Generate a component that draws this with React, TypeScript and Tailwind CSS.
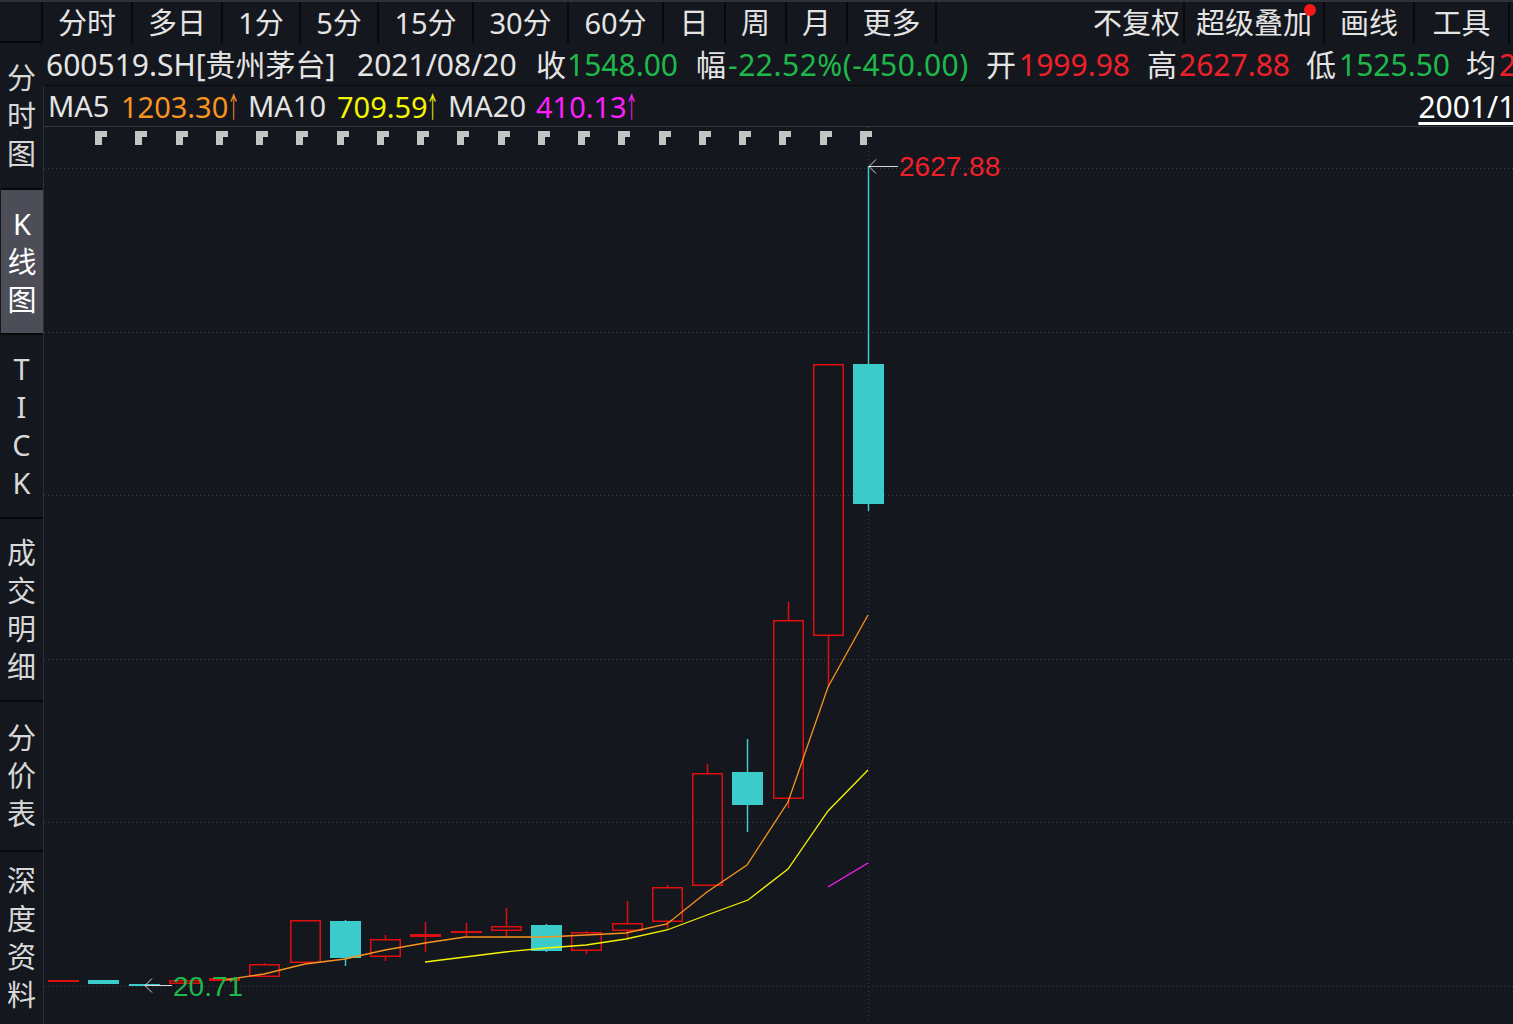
import React from "react";

const topTabs = [
  { label: "分时", w: 90 },
  { label: "多日", w: 90 },
  { label: "1分", w: 78 },
  { label: "5分", w: 78 },
  { label: "15分", w: 95 },
  { label: "30分", w: 95 },
  { label: "60分", w: 95 },
  { label: "日", w: 62 },
  { label: "周", w: 61 },
  { label: "月", w: 61 },
  { label: "更多", w: 89 },
];

const sideTabs = [
  { label: "分时图", h: 145 },
  { label: "K线图", h: 145, active: true },
  { label: "TICK", h: 184 },
  { label: "成交明细", h: 183 },
  { label: "分价表", h: 150 },
  { label: "深度资料", h: 174 },
];

// [boxTop, boxBottom, wickTop, wickBottom, up?]  up = red hollow, else cyan filled
const candles: [number, number, number, number, boolean][] = [
  [981, 981, 981, 983, true],
  [981, 985, 981, 985, false],
  [985, 986, 985, 986, false],
  [981, 985, 981, 985, true],
  [979, 982, 979, 982, true],
  [965, 978, 964, 978, true],
  [921, 964, 921, 964, true],
  [922, 959, 921, 967, false],
  [940, 958, 936, 962, true],
  [935, 938, 923, 953, true],
  [932, 934, 924, 939, true],
  [927, 932, 909, 939, true],
  [926, 952, 925, 953, false],
  [933, 952, 932, 955, true],
  [924, 932, 902, 940, true],
  [888, 923, 886, 930, true],
  [774, 887, 765, 887, true],
  [773, 806, 740, 833, false],
  [621, 800, 603, 809, true],
  [365, 637, 365, 688, true],
  [365, 505, 167, 512, false],
];

const ma5 = [
  [224, 981], [264, 975], [305, 965], [345, 960], [385, 951], [425, 944], [465, 938],
  [505, 938], [546, 938], [586, 936], [626, 934], [667, 925], [707, 893], [747, 866],
  [788, 803], [828, 688], [868, 616],
];
const ma10 = [
  [425, 963], [465, 958], [505, 953], [546, 949], [586, 946], [626, 940], [667, 931],
  [707, 916], [748, 901], [788, 870], [828, 812], [868, 771],
];
const ma20 = [
  [828, 888], [868, 864],
];

const gridY = [169, 333, 496, 660, 823, 987];

const RED = "#e00f0f";
const CYAN = "#3ccbcb";

function pts(p: number[][]) {
  return p.map((q) => q.join(",")).join(" ");
}

// thin tall arrow that follows the MA values
function Up() {
  return (
    <span className="inline-flex w-[10px] justify-center overflow-visible">
      <span className="inline-block scale-x-[0.45] font-['Noto_Sans_CJK_SC',sans-serif]">↑</span>
    </span>
  );
}

function Chart() {
  return (
    <svg width={1469} height={896} viewBox="44 128 1469 896" className="block">
      {gridY.map((y) => (
        <line key={y} x1={44} x2={1513} y1={y + 0.5} y2={y + 0.5} stroke="#3a3e46" strokeDasharray="1 3" />
      ))}
      <line x1={868.5} x2={868.5} y1={128} y2={1024} stroke="#3a3e46" strokeDasharray="1 3" />

      {/* marker glyphs */}
      {Array.from({ length: 20 }).map((_, i) => {
        const x = Math.round(95 + 40.26 * i);
        return <path key={i} d={`M${x} 132 H${x + 12} V138 H${x + 7} V146 H${x} Z`} fill="#c4c4c4" />;
      })}

      {candles.map(([bt, bb, wt, wb, up], i) => {
        const left = Math.round(48 + 40.26 * i);
        const cx = left + 15.5;
        const h = Math.max(bb - bt, 1);
        if (up) {
          return (
            <g key={i}>
              <line x1={cx} x2={cx} y1={wt} y2={bt} stroke={RED} strokeWidth={1.5} />
              <line x1={cx} x2={cx} y1={bb} y2={wb} stroke={RED} strokeWidth={1.5} />
              {h <= 2 ? (
                <rect x={left} y={bt} width={31} height={2} fill={RED} />
              ) : (
                <rect x={left + 0.75} y={bt + 0.75} width={29.5} height={h - 1.5} fill="none" stroke={RED} strokeWidth={1.5} />
              )}
            </g>
          );
        }
        return (
          <g key={i}>
            <line x1={cx} x2={cx} y1={wt} y2={wb} stroke={CYAN} strokeWidth={1.5} />
            <rect x={left} y={bt} width={31} height={Math.max(h, 2)} fill={CYAN} />
          </g>
        );
      })}

      <polyline points={pts(ma5)} fill="none" stroke="#f7941d" strokeWidth={1.3} />
      <polyline points={pts(ma10)} fill="none" stroke="#f5f500" strokeWidth={1.3} />
      <polyline points={pts(ma20)} fill="none" stroke="#ff1fff" strokeWidth={1.3} />

      {/* high label */}
      <line x1={869} x2={898} y1={167.5} y2={167.5} stroke="#d8d8d8" />
      <path d="M876 160.5 L869 167.5 L876 174.5" fill="none" stroke="#d8d8d8" />
      <text x={899} y={177} fill="#f0202a" fontSize={28} fontFamily="'Liberation Sans', Arial, sans-serif">
        2627.88
      </text>

      {/* low label */}
      <line x1={145} x2={172} y1={986.5} y2={986.5} stroke="#d8d8d8" />
      <path d="M152 979.5 L145 986.5 L152 993.5" fill="none" stroke="#d8d8d8" />
      <text x={173} y={997} fill="#1fb84a" fontSize={28} fontFamily="'Liberation Sans', Arial, sans-serif">
        20.71
      </text>
    </svg>
  );
}

export default function App() {
  return (
    <div className="w-[1513px] h-[1024px] bg-[#14171d] overflow-hidden flex flex-col font-['Noto_Sans','Noto_Sans_CJK_SC',sans-serif] text-[#e4e4e4]">
      {/* top tab bar */}
      <div className="h-[43px] border-t-2 border-[#2e3138] flex text-[29px] leading-none shrink-0">
        <div className="w-[43px] border-b-2 border-r-2 border-[#08090b]" />
        {topTabs.map((t) => (
          <div
            key={t.label}
            style={{ width: t.w }}
            className="flex items-center justify-center border-r-2 border-[#08090b] shrink-0"
          >
            {t.label}
          </div>
        ))}
        <div className="flex-1" />
        <div className="w-[95px] flex items-center justify-center border-r-2 border-[#08090b]">不复权</div>
        <div className="w-[140px] flex items-center justify-center border-r-2 border-[#08090b] relative">
          超级叠加
          <span className="absolute right-[7px] top-[2px] w-[12px] h-[12px] rounded-full bg-[#f01818]" />
        </div>
        <div className="w-[90px] flex items-center justify-center border-r-2 border-[#08090b]">画线</div>
        <div className="w-[95px] flex items-center justify-center border-r-2 border-[#08090b]">工具</div>
        <div className="w-[3px]" />
      </div>

      <div className="flex flex-1 min-h-0">
        {/* left sidebar */}
        <div className="w-[43px] flex flex-col shrink-0 text-[29px]">
          {sideTabs.map((s, i) => (
            <div
              key={s.label}
              style={{ height: s.h }}
              className={`flex flex-col items-center justify-center shrink-0 leading-[38px] ${
                i > 0 ? "border-t-2 border-[#08090b]" : ""
              } ${s.active ? "bg-[#4c4d57] text-white ml-[1px]" : "text-[#d8d8d8]"}`}
            >
              {s.label.split("").map((c, j) => (
                <span key={j}>{c}</span>
              ))}
            </div>
          ))}
        </div>

        <div className="flex-1 flex flex-col min-w-0">
          {/* quote line */}
          <div className="h-[42px] flex items-center pl-[3px] text-[30px] whitespace-nowrap overflow-hidden shrink-0">
            <span className="w-[311px] shrink-0">600519.SH[贵州茅台]</span>
            <span className="w-[179px] shrink-0">2021/08/20</span>
            <span className="w-[160px] shrink-0">
              收<span className="text-[#1fb84a] ml-[1px]">1548.00</span>
            </span>
            <span className="w-[290px] shrink-0">
              幅<span className="text-[#1fb84a] ml-[2px] tracking-[0.5px]">-22.52%(-450.00)</span>
            </span>
            <span className="w-[161px] shrink-0">
              开<span className="text-[#f0202a] ml-[3px]">1999.98</span>
            </span>
            <span className="w-[159px] shrink-0">
              高<span className="text-[#f0202a] ml-[2px]">2627.88</span>
            </span>
            <span className="w-[160px] shrink-0">
              低<span className="text-[#1fb84a] ml-[3px]">1525.50</span>
            </span>
            <span className="shrink-0">
              均<span className="text-[#f0202a] ml-[3px]">2021.64</span>
            </span>
          </div>

          {/* MA line */}
          <div className="h-[42px] flex items-center pl-[4px] text-[29px] whitespace-nowrap overflow-hidden border-t border-[#08090b] border-l border-l-[#2b2e35] border-b border-b-[#34373e] shrink-0">
            <span className="w-[73px] shrink-0">MA5</span>
            <span className="w-[127px] shrink-0 text-[#f7941d]">
              1203.30<Up />
            </span>
            <span className="w-[89px] shrink-0">MA10</span>
            <span className="w-[111px] shrink-0 text-[#f5f500]">
              709.59<Up />
            </span>
            <span className="w-[88px] shrink-0">MA20</span>
            <span className="shrink-0 text-[#ff1fff]">
              410.13<Up />
            </span>
            <span className="flex-1" />
            <span className="underline underline-offset-4 text-white text-[30px] -mr-[65px]">2001/12/14</span>
          </div>

          {/* chart */}
          <div className="flex-1 min-h-0 overflow-hidden border-l border-[#2b2e35]">
            <Chart />
          </div>
        </div>
      </div>
    </div>
  );
}
